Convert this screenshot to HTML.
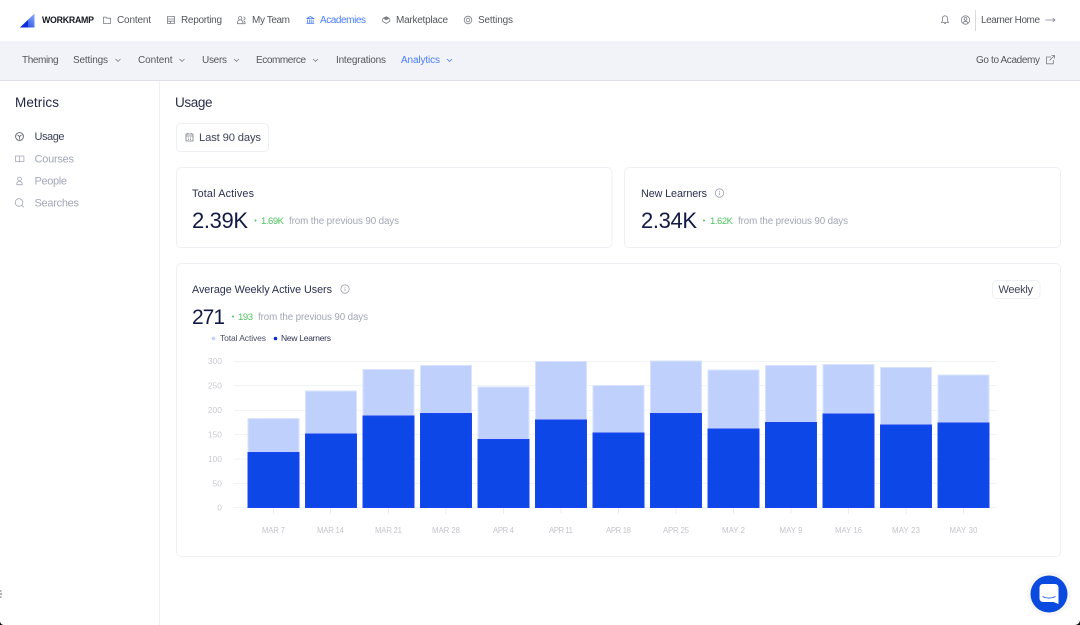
<!DOCTYPE html>
<html><head><meta charset="utf-8"><title>Metrics</title>
<style>
html,body{margin:0;padding:0;background:#fff;width:1080px;height:625px;overflow:hidden}
svg{display:block;filter:blur(.3px)}
text{font-family:"Liberation Sans","DejaVu Sans",sans-serif}
.n{font-size:10px;fill:#54565e}
.b{fill:#4a7dfb}
.side{font-size:11px;fill:#a3a7b8}
.t{font-size:10.8px;fill:#2a3050}
.big{font-size:22px;fill:#121a45}
.g{font-size:9.5px;fill:#4cc45e}
.m{font-size:9.8px;fill:#a3a7b6}
.y{font-size:8.5px;fill:#c9cacf;text-anchor:end}
.x{font-size:7.8px;fill:#c4c5ca;text-anchor:middle}
.ic{fill:none;stroke:#7b7e87;stroke-width:.8}
.l{fill:#c0d0fc;stroke:#d9e3fe;stroke-width:1}
.d{fill:#0d47e8;stroke:#1a45f0;stroke-width:1}
</style></head><body>
<svg width="1080" height="625" viewBox="0 0 1080 625" xmlns="http://www.w3.org/2000/svg">
<defs>
<linearGradient id="lg" x1="0" y1="1" x2="1" y2="0"><stop offset="0" stop-color="#0a35e0"/><stop offset="1" stop-color="#8fb0fa"/></linearGradient>
</defs>
<rect width="1080" height="625" fill="#fff"/>

<!-- top nav -->
<polygon points="20,27.5 34.5,27.5 34.5,13.5" fill="url(#lg)"/>
<polygon points="20,27.5 28,27.5 28,20" fill="#0a2fe0"/>
<text x="42" y="23" textLength="52" lengthAdjust="spacing" style="font-size:8.8px;fill:#15171f;font-weight:bold">WORKRAMP</text>

<path class="ic" d="M103.5 17.2v6.3h7v-5.3h-3.6l-1-1z"/>
<text class="n" x="117" y="23" textLength="34" lengthAdjust="spacing">Content</text>
<path class="ic" d="M167.5 16.5h7v7h-7zM167.5 19h7M167.5 21.2h7M170.5 21.2v2.3"/>
<text class="n" x="181" y="23" textLength="41" lengthAdjust="spacing">Reporting</text>
<path class="ic" d="M240.2 16.5a1.7 1.7 0 1 1-.01 0M237.5 23.7v-1.2a2.7 2.7 0 0 1 5.4 0v1.2zM243.5 17a1.5 1.5 0 0 1 0 3M243.8 21a2.4 2.4 0 0 1 1.2 2.7h-1.5"/>
<text class="n" x="252" y="23" textLength="38" lengthAdjust="spacing">My Team</text>
<path class="ic" style="stroke:#4a7dfb" d="M306.5 18.6l3.8-2.1 3.8 2.1zM307.5 19.5v3.2M309.4 19.5v3.2M311.2 19.5v3.2M313.1 19.5v3.2M306.5 23.3h7.6"/>
<text class="n b" x="320" y="23" textLength="46" lengthAdjust="spacing">Academies</text>
<path d="M386.2 16.2l3.8 2-3.8 2-3.8-2z" fill="#7b7e87"/><path class="ic" d="M382.6 18.8v2.6l3.6 2 3.6-2v-2.6"/>
<text class="n" x="396" y="23" textLength="52" lengthAdjust="spacing">Marketplace</text>
<circle class="ic" cx="468" cy="20" r="3.8"/><circle class="ic" cx="468" cy="20" r="1.8"/>
<text class="n" x="478" y="23" textLength="35" lengthAdjust="spacing">Settings</text>

<path class="ic" d="M945 15.8a2.6 2.6 0 0 0-2.6 2.6v2.4l-.9 1.7h7l-.9-1.7v-2.4a2.6 2.6 0 0 0-2.6-2.6zM944 23.6h2"/>
<circle class="ic" cx="965.5" cy="20" r="4.2"/><circle class="ic" cx="965.5" cy="18.9" r="1.4"/><path class="ic" d="M963 23a2.7 2.7 0 0 1 5 0"/>
<rect x="975" y="10" width="1" height="21" fill="#d9dade"/>
<text class="n" x="981" y="23" textLength="59" lengthAdjust="spacing">Learner Home</text>
<path class="ic" d="M1045.5 20h9.5M1052.6 18l2.4 2-2.4 2"/>

<!-- sub nav -->
<rect x="0" y="41" width="1080" height="39" fill="#f2f3f8"/>
<rect x="0" y="80" width="1080" height="1" fill="#e0e1e7"/>
<text class="n" x="22" y="63" textLength="36.5" lengthAdjust="spacing">Theming</text>
<text class="n" x="73" y="63" textLength="35" lengthAdjust="spacing">Settings</text>
<path class="ic" d="M115.5 59l2.5 2.4 2.5-2.4"/>
<text class="n" x="138" y="63" textLength="34.5" lengthAdjust="spacing">Content</text>
<path class="ic" d="M179.5 59l2.5 2.4 2.5-2.4"/>
<text class="n" x="202" y="63" textLength="25" lengthAdjust="spacing">Users</text>
<path class="ic" d="M234 59l2.5 2.4 2.5-2.4"/>
<text class="n" x="256" y="63" textLength="50" lengthAdjust="spacing">Ecommerce</text>
<path class="ic" d="M313 59l2.5 2.4 2.5-2.4"/>
<text class="n" x="336" y="63" textLength="50" lengthAdjust="spacing">Integrations</text>
<text class="n b" x="401" y="63" textLength="39" lengthAdjust="spacing">Analytics</text>
<path class="ic" style="stroke:#4a7dfb" d="M447 59l2.5 2.4 2.5-2.4"/>
<text class="n" x="976" y="63" textLength="64" lengthAdjust="spacing">Go to Academy</text>
<path class="ic" d="M1051 57h-4.500v6.800h6.800v-3.800M1049.500 60.500l5-5M1051.500 55.500h3v3"/>

<!-- sidebar -->
<rect x="159" y="81" width="1" height="544" fill="#f0f0f3"/>
<text x="15" y="107" textLength="44" lengthAdjust="spacing" style="font-size:13.500px;fill:#1f2542">Metrics</text>
<circle cx="19.500" cy="136.500" r="3.900" fill="none" stroke="#5a5e6c" stroke-width=".9"/><path d="M17.500 135l2 1.500 2-1.500M19.500 136.500v3" fill="none" stroke="#5a5e6c" stroke-width=".8"/>
<text x="34.500" y="140" textLength="30" lengthAdjust="spacing" style="font-size:11px;fill:#3c4158">Usage</text>
<path class="ic" style="stroke:#a3a7b6" d="M15.500 156h3.300a.9.900 0 0 1 .9.700.9.900 0 0 1 .9-.700h3.300v5.500h-3.300a.9.900 0 0 0-.9.500.9.900 0 0 0-.9-.500h-3.300zM19.700 156.700V162"/>
<text class="side" x="34.500" y="162.500" textLength="39.500" lengthAdjust="spacing">Courses</text>
<circle class="ic" style="stroke:#a3a7b6" cx="19.500" cy="179" r="1.900"/><path class="ic" style="stroke:#a3a7b6" d="M16.800 184.700v-.700a2.700 2.700 0 0 1 5.400 0v.700z"/>
<text class="side" x="34.500" y="184.500" textLength="32.500" lengthAdjust="spacing">People</text>
<circle class="ic" style="stroke:#a3a7b6" cx="19" cy="202.500" r="3.800"/><path class="ic" style="stroke:#a3a7b6" d="M21.800 205.300l2 2"/>
<text class="side" x="34.500" y="206.500" textLength="44.500" lengthAdjust="spacing">Searches</text>

<!-- heading -->
<text x="175" y="107" textLength="37.500" lengthAdjust="spacing" style="font-size:13.500px;fill:#2a3048">Usage</text>
<rect x="176.500" y="123.500" width="92" height="28" rx="4" fill="#fff" stroke="#eff0f3"/>
<path class="ic" d="M186 134h7v7h-7zM186 136h7M187.800 133v1.500M191.200 133v1.500M188 138h1M190 138h1M188 139.500h1M190 139.500h1"/>
<text x="199" y="141" textLength="62" lengthAdjust="spacing" style="font-size:11.200px;fill:#3f4458">Last 90 days</text>

<!-- cards -->
<rect x="176.500" y="167.500" width="435.500" height="80" rx="4.500" fill="#fff" stroke="#eff0f3"/>
<rect x="624.500" y="167.500" width="436" height="80" rx="4.500" fill="#fff" stroke="#eff0f3"/>
<rect x="176.500" y="263.500" width="884" height="293" rx="4.500" fill="#fff" stroke="#eff0f3"/>

<text class="t" x="192" y="197" textLength="62" lengthAdjust="spacing">Total Actives</text>
<text class="big" x="192" y="228" textLength="56" lengthAdjust="spacing">2.39K</text>
<circle cx="255.500" cy="220.500" r="1" fill="#4cc45e"/>
<text class="g" x="261" y="224" textLength="23" lengthAdjust="spacing">1.69K</text>
<text class="m" x="289" y="224" textLength="110" lengthAdjust="spacing">from the previous 90 days</text>

<text class="t" x="641" y="197" textLength="66" lengthAdjust="spacing">New Learners</text>
<circle class="ic" style="stroke:#9fa2ac" cx="719.500" cy="193" r="4.200"/><path class="ic" style="stroke:#9fa2ac" d="M719.500 192.500v2.500M719.500 190.700v1"/>
<text class="big" x="641" y="228" textLength="56" lengthAdjust="spacing">2.34K</text>
<circle cx="704" cy="220.500" r="1" fill="#4cc45e"/>
<text class="g" x="710" y="224" textLength="23" lengthAdjust="spacing">1.62K</text>
<text class="m" x="738" y="224" textLength="110" lengthAdjust="spacing">from the previous 90 days</text>

<text class="t" x="192" y="293" textLength="140" lengthAdjust="spacing">Average Weekly Active Users</text>
<circle class="ic" style="stroke:#9fa2ac" cx="345" cy="289" r="4.200"/><path class="ic" style="stroke:#9fa2ac" d="M345 288.500v2.500M345 286.700v1"/>
<rect x="992.500" y="280.500" width="47.500" height="18" rx="4" fill="#fff" stroke="#eff0f3"/>
<text x="998.500" y="293" textLength="34.500" lengthAdjust="spacing" style="font-size:11px;fill:#3f4458">Weekly</text>

<text x="192" y="324" textLength="33" lengthAdjust="spacing" style="font-size:21px;fill:#121a45">271</text>
<circle cx="233" cy="316.500" r="1" fill="#4cc45e"/>
<text class="g" x="238" y="320" textLength="15" lengthAdjust="spacing">193</text>
<text class="m" x="258" y="320" textLength="110" lengthAdjust="spacing">from the previous 90 days</text>

<circle cx="213.500" cy="338.500" r="1.800" fill="#c0d0fc"/>
<text x="220" y="341" textLength="46" lengthAdjust="spacing" style="font-size:8.500px;fill:#4a4f66">Total Actives</text>
<circle cx="275.500" cy="338.500" r="1.800" fill="#0a2be0"/>
<text x="281" y="341" textLength="50" lengthAdjust="spacing" style="font-size:8.500px;fill:#2f3552">New Learners</text>

<!-- grid -->
<g stroke="#f2f3f6" stroke-width="1">
<path d="M234 361.500h763M234 385.500h763M234 410.500h763M234 434.500h763M234 459h763M234 483.500h763M234 507.500h763"/>
</g>
<g stroke="#eceef2" stroke-width="1">
<path d="M273.500 508v6M330.500 508v6M388.500 508v6M446 508v6M503.500 508v6M561 508v6M618.500 508v6M676 508v6M733.500 508v6M791 508v6M848.500 508v6M906 508v6M963.500 508v6"/>
</g>
<g class="yl">
<text class="y" x="222" y="364">300</text>
<text class="y" x="222" y="388.500">250</text>
<text class="y" x="222" y="413">200</text>
<text class="y" x="222" y="437.500">150</text>
<text class="y" x="222" y="462">100</text>
<text class="y" x="222" y="486.500">50</text>
<text class="y" x="222" y="510.500">0</text>
</g>

<!-- bars -->
<rect class="l" x="248" y="418.500" width="51" height="34"/><rect class="d" x="248" y="452.500" width="51" height="55"/>
<rect class="l" x="305.500" y="391" width="51" height="43"/><rect class="d" x="305.500" y="434" width="51" height="73.500"/>
<rect class="l" x="363" y="369.500" width="51" height="46.500"/><rect class="d" x="363" y="416" width="51" height="91.500"/>
<rect class="l" x="420.500" y="365.500" width="51" height="48"/><rect class="d" x="420.500" y="413.500" width="51" height="94"/>
<rect class="l" x="478" y="387" width="51" height="52.500"/><rect class="d" x="478" y="439.500" width="51" height="68"/>
<rect class="l" x="535.500" y="361.500" width="51" height="58.500"/><rect class="d" x="535.500" y="420" width="51" height="87.500"/>
<rect class="l" x="593" y="385.500" width="51" height="47.500"/><rect class="d" x="593" y="433" width="51" height="74.500"/>
<rect class="l" x="650.500" y="361" width="51" height="52.500"/><rect class="d" x="650.500" y="413.500" width="51" height="94"/>
<rect class="l" x="708" y="370" width="51" height="59"/><rect class="d" x="708" y="429" width="51" height="78.500"/>
<rect class="l" x="765.500" y="365.500" width="51" height="57"/><rect class="d" x="765.500" y="422.500" width="51" height="85"/>
<rect class="l" x="823" y="364.500" width="51" height="49.500"/><rect class="d" x="823" y="414" width="51" height="93.500"/>
<rect class="l" x="880.500" y="367.500" width="51" height="57.500"/><rect class="d" x="880.500" y="425" width="51" height="82.500"/>
<rect class="l" x="938" y="375" width="51" height="48"/><rect class="d" x="938" y="423" width="51" height="84.500"/>

<text class="x" x="273.500" y="533" textLength="23" lengthAdjust="spacing">MAR 7</text>
<text class="x" x="330.500" y="533" textLength="27" lengthAdjust="spacing">MAR 14</text>
<text class="x" x="388.500" y="533" textLength="27" lengthAdjust="spacing">MAR 21</text>
<text class="x" x="446" y="533" textLength="28" lengthAdjust="spacing">MAR 28</text>
<text class="x" x="503.500" y="533" textLength="21" lengthAdjust="spacing">APR 4</text>
<text class="x" x="561" y="533" textLength="24" lengthAdjust="spacing">APR 11</text>
<text class="x" x="618.500" y="533" textLength="25" lengthAdjust="spacing">APR 18</text>
<text class="x" x="676" y="533" textLength="26" lengthAdjust="spacing">APR 25</text>
<text class="x" x="733.500" y="533" textLength="23" lengthAdjust="spacing">MAY 2</text>
<text class="x" x="791" y="533" textLength="23" lengthAdjust="spacing">MAY 9</text>
<text class="x" x="848.500" y="533" textLength="27" lengthAdjust="spacing">MAY 16</text>
<text class="x" x="906" y="533" textLength="28" lengthAdjust="spacing">MAY 23</text>
<text class="x" x="963.500" y="533" textLength="28" lengthAdjust="spacing">MAY 30</text>

<!-- chat launcher -->
<circle cx="1049" cy="594" r="22" fill="#000" opacity=".03"/>
<circle cx="1049" cy="594" r="18.500" fill="#0b4ade"/>
<path d="M1043 584h12a3.500 3.500 0 0 1 3.500 3.500v16.500l-5-2h-10.500a3.500 3.500 0 0 1-3.500-3.500v-11a3.500 3.500 0 0 1 3.500-3.500z" fill="#fff"/>
<path d="M1042.500 596.500c4 2 9 2 13 0" fill="none" stroke="#0b4ade" stroke-width=".9"/>

<!-- corners & artefact -->
<path d="M1080 620v5h-5a5 5 0 0 0 5-5z" fill="#0a0a0a"/>
<path d="M0 621v4h4a4 4 0 0 1-4-4z" fill="#0a0a0a"/>
<path d="M0 591h1.500M0 594h2M0 597h1.500" stroke="#666" stroke-width="1"/>
</svg>
</body></html>
